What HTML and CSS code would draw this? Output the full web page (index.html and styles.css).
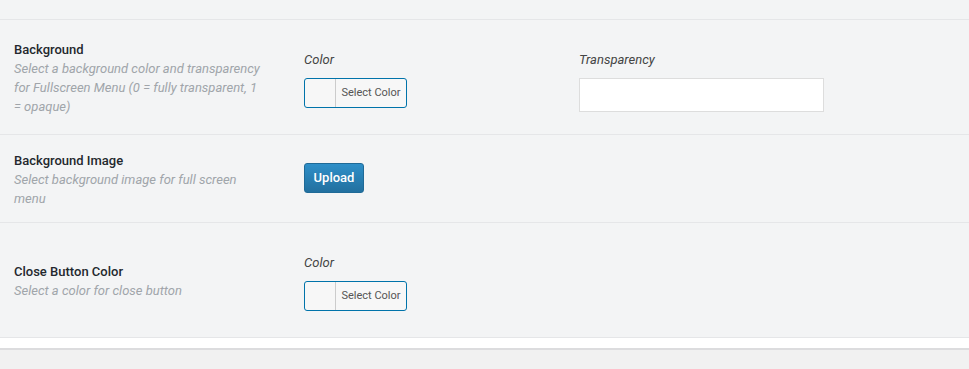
FILE: index.html
```html
<!DOCTYPE html>
<html lang="en">
<head>
    <meta charset="UTF-8">
    <title>Fullscreen Menu Settings</title>
    <link rel="stylesheet" href="styles.css">
</head>
<body>
    <div class="panel">
        <div class="row">
            <div class="info">
                <h4 class="title">Background</h4>
                <p class="desc">Select a background color and transparency for Fullscreen Menu (0 = fully transparent, 1 = opaque)</p>
            </div>
            <div class="controls">
                <div class="field">
                    <label class="field-label">Color</label>
                    <button class="color-picker"><span class="swatch"></span><span class="picker-text">Select Color</span></button>
                </div>
                <div class="field">
                    <label class="field-label">Transparency</label>
                    <input type="text" class="text-input">
                </div>
            </div>
        </div>

        <div class="row row-short">
            <div class="info">
                <h4 class="title">Background Image</h4>
                <p class="desc">Select background image for full screen menu</p>
            </div>
            <div class="controls">
                <button class="upload">Upload</button>
            </div>
        </div>

        <div class="row">
            <div class="info">
                <h4 class="title">Close Button Color</h4>
                <p class="desc">Select a color for close button</p>
            </div>
            <div class="controls">
                <div class="field">
                    <label class="field-label">Color</label>
                    <button class="color-picker"><span class="swatch"></span><span class="picker-text">Select Color</span></button>
                </div>
            </div>
        </div>
    </div>
    <div class="footer-strip"></div>
</body>
</html>
```

FILE: styles.css
```css
* {
    margin: 0;
    padding: 0;
    box-sizing: border-box;
}

body {
    background: #f1f1f1;
    font-family: Roboto, sans-serif;
    font-size: 13px;
    color: #23282d;
}

.panel {
    background: #f3f4f5;
    padding-top: 19px;
}

.row {
    display: flex;
    align-items: center;
    height: 115px;
    border-top: 1px solid #e5e6e8;
    padding: 2px 0 0 14px;
}

.row-short {
    height: 88px;
}

.row:last-child {
    border-bottom: 1px solid #e5e6e8;
    height: 116px;
}

.info {
    width: 290px;
}

.title {
    font-size: 13px;
    font-weight: 500;
    line-height: 19px;
    color: #23282d;
}

.desc {
    max-width: 252px;
    font-style: italic;
    line-height: 19px;
    color: #a0a5aa;
}

.controls {
    display: flex;
    align-items: flex-start;
    align-self: flex-start;
    margin-top: 28px;
}

.row-short .controls {
    align-self: center;
    margin: 0 0 4px;
}

.field {
    width: 275px;
    display: flex;
    flex-direction: column;
    align-items: flex-start;
}

.field-label {
    font-style: italic;
    line-height: 19px;
    color: #444;
    margin-bottom: 9px;
}

.color-picker {
    display: flex;
    height: 30px;
    width: 103px;
    border: 1px solid #0073aa;
    border-radius: 3px;
    background: #f7f7f7;
    overflow: hidden;
    cursor: pointer;
    font-family: inherit;
}

.swatch {
    width: 31px;
    height: 100%;
    border-right: 1px solid #ccc;
}

.picker-text {
    flex: 1;
    font-size: 11px;
    line-height: 28px;
    color: #555;
    text-align: center;
}

.text-input {
    width: 245px;
    height: 34px;
    border: 1px solid #ddd;
    background: #fff;
    outline: none;
}

.upload {
    width: 60px;
    height: 30px;
    border: 1px solid #1f6a97;
    border-radius: 3px;
    background: linear-gradient(#2e8fc8, #22709f);
    color: #fff;
    font-family: inherit;
    font-size: 13px;
    font-weight: 500;
    cursor: pointer;
}

.footer-strip {
    height: 12px;
    background: #fff;
    border-bottom: 2px solid #dcdcde;
}
```
